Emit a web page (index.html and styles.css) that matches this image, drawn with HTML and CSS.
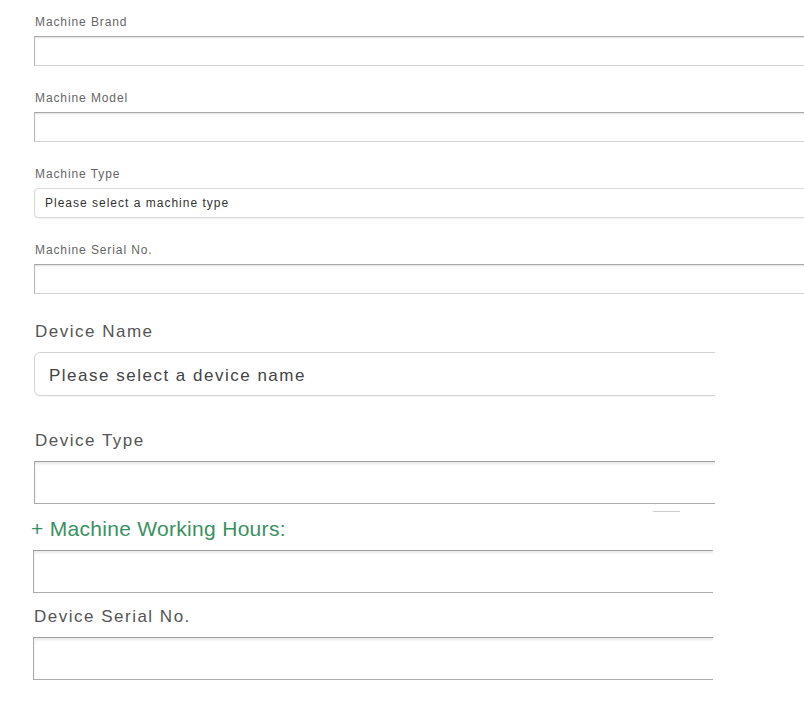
FILE: index.html
```html
<!DOCTYPE html>
<html>
<head>
<meta charset="utf-8">
<link rel="stylesheet" href="styles.css">
</head>
<body>
<div class="page">
  <div class="machine">
    <div class="field">
      <label class="lbl-sm">Machine Brand</label>
      <input class="inp-sm" type="text">
    </div>
    <div class="field">
      <label class="lbl-sm">Machine Model</label>
      <input class="inp-sm" type="text">
    </div>
    <div class="field">
      <label class="lbl-sm">Machine Type</label>
      <select class="sel-sm"><option>Please select a machine type</option></select>
    </div>
    <div class="field">
      <label class="lbl-sm">Machine Serial No.</label>
      <input class="inp-sm" type="text">
    </div>
  </div>

  <div class="device">
    <div class="field-lg">
      <label class="lbl-lg">Device Name</label>
      <select class="sel-lg"><option>Please select a device name</option></select>
    </div>
    <div class="field-lg">
      <label class="lbl-lg">Device Type</label>
      <input class="inp-lg" type="text">
    </div>
    <div class="stub"></div>
  </div>

  <div class="device2">
    <div class="field-hours">
      <label class="lbl-green">+ Machine Working Hours:</label>
      <input class="inp-lg" type="text">
    </div>
    <div class="field-serial">
      <label class="lbl-lg">Device Serial No.</label>
      <input class="inp-lg" type="text">
    </div>
  </div>
</div>
</body>
</html>
```
FILE: styles.css
```css
html, body {
  margin: 0;
  padding: 0;
  background: #ffffff;
  overflow: hidden;
}
body {
  width: 804px;
  height: 706px;
  font-family: "Liberation Sans", Arial, sans-serif;
}
.page {
  padding-top: 15px;
}
.machine {
  margin-left: 34px;
  width: 790px;
  padding-bottom: 1px;
}
.field {
  display: flex;
  flex-direction: column;
  margin-bottom: 25px;
}
.lbl-sm {
  display: block;
  font-size: 12px;
  line-height: 14px;
  height: 14px;
  color: #666;
  letter-spacing: 0.9px;
  margin-bottom: 7px;
  padding-left: 1px;
}
.inp-sm {
  box-sizing: border-box;
  width: 100%;
  height: 30px;
  margin: 0;
  border: 1px solid;
  border-color: #a8a8a8 #c4c4c4 #d0d0d0 #b8b8b8;
  box-shadow: inset 0 1px 2px rgba(0,0,0,0.12);
  background: #fff;
  border-radius: 0;
  outline: none;
}
.sel-sm {
  appearance: none;
  -webkit-appearance: none;
  box-sizing: border-box;
  width: 100%;
  height: 30px;
  margin: 0;
  border: 1px solid #d9d9d9;
  border-radius: 4px;
  background: #fff;
  padding: 0 0 0 10px;
  font-family: "Liberation Sans", Arial, sans-serif;
  font-size: 12px;
  color: #333;
  letter-spacing: 1px;
  box-shadow: 0 1px 1px rgba(0,0,0,0.05);
}
.device {
  margin-left: 34px;
  width: 681px;
  overflow: hidden;
  margin-top: 2px;
}
.field-lg {
  display: flex;
  flex-direction: column;
}
.field-lg + .field-lg {
  margin-top: 35px;
}
.lbl-lg {
  display: block;
  font-size: 17px;
  line-height: 20px;
  height: 20px;
  color: #555;
  letter-spacing: 1.5px;
  padding-left: 1px;
  margin-bottom: 10px;
}
.sel-lg {
  appearance: none;
  -webkit-appearance: none;
  box-sizing: border-box;
  width: 720px;
  height: 44px;
  margin: 0;
  border: 1px solid #d4d4d4;
  border-radius: 6px;
  background: #fff;
  padding: 3px 0 0 14px;
  font-family: "Liberation Sans", Arial, sans-serif;
  font-size: 17px;
  color: #444;
  letter-spacing: 1.5px;
  box-shadow: 0 1px 1px rgba(0,0,0,0.04);
}
.inp-lg {
  box-sizing: border-box;
  width: 720px;
  height: 43px;
  margin: 0;
  border: 1px solid;
  border-color: #9f9f9f #b0b0b0 #ababab #aaaaaa;
  box-shadow: inset 0 2px 3px rgba(0,0,0,0.09);
  background: #fff;
  border-radius: 0;
  outline: none;
}
.stub {
  width: 27px;
  height: 1px;
  background: #cfcfcf;
  margin: 7px 0 0 619px;
}
.device2 {
  margin-left: 31px;
  width: 682px;
  overflow: hidden;
}
.device2 .inp-lg {
  margin-left: 2px;
}
.lbl-green {
  display: block;
  font-size: 21px;
  line-height: 24px;
  height: 24px;
  color: #3a9160;
  letter-spacing: 0.3px;
  margin: 5px 0 9px 0;
}
.field-serial {
  margin-top: 14px;
}
.field-serial .lbl-lg {
  padding-left: 3px;
}
```
